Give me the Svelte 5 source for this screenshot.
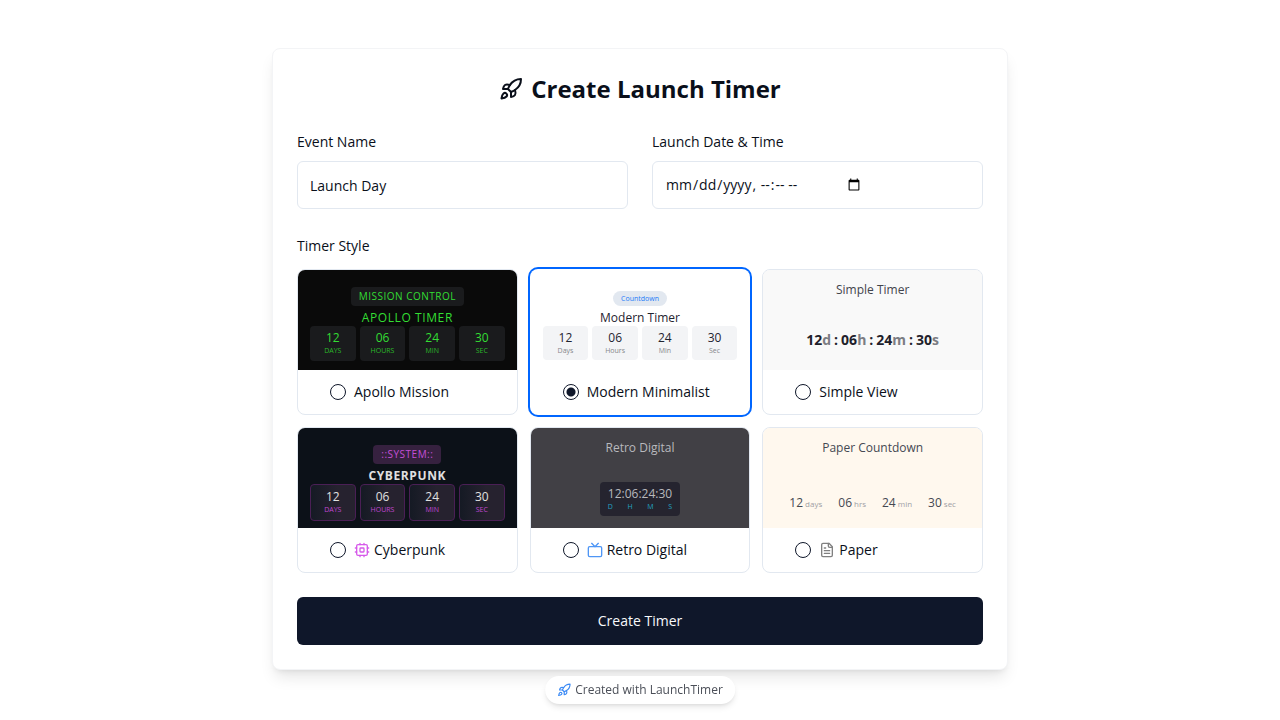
<script lang="ts">
  let eventName = $state('Launch Day');
  let launchAt = $state('');
  let selected = $state('modern');

  const values = ['12', '06', '24', '30'];
  const upper = ['DAYS', 'HOURS', 'MIN', 'SEC'];
  const styles = [
    { id: 'apollo', name: 'Apollo Mission', badge: 'MISSION CONTROL', title: 'APOLLO TIMER', units: upper },
    { id: 'modern', name: 'Modern Minimalist', badge: 'Countdown', title: 'Modern Timer', units: ['Days', 'Hours', 'Min', 'Sec'] },
    { id: 'simple', name: 'Simple View', title: 'Simple Timer', units: ['d', 'h', 'm', 's'] },
    { id: 'cyber', name: 'Cyberpunk', badge: '::SYSTEM::', title: 'CYBERPUNK', units: upper },
    { id: 'retro', name: 'Retro Digital', title: 'Retro Digital', units: ['D', 'H', 'M', 'S'] },
    { id: 'paper', name: 'Paper', title: 'Paper Countdown', units: ['days', 'hrs', 'min', 'sec'] }
  ];
</script>

{#snippet rocket()}
  <svg class="icon rocket" viewBox="0 0 24 24" aria-hidden="true">
    <path d="M4.5 16.5c-1.5 1.26-2 5-2 5s3.74-.5 5-2c.71-.84.7-2.13-.09-2.91a2.18 2.18 0 0 0-2.91-.09z" />
    <path d="m12 15-3-3a22 22 0 0 1 2-3.95A12.88 12.88 0 0 1 22 2c0 2.72-.78 7.5-6 11a22.35 22.35 0 0 1-4 2z" />
    <path d="M9 12H4s.55-3.03 2-4c1.62-1.08 5 0 5 0" />
    <path d="M12 15v5s3.03-.55 4-2c1.08-1.62 0-5 0-5" />
  </svg>
{/snippet}

<main>
  <form class="panel" onsubmit={(e) => e.preventDefault()}>
    <h1>{@render rocket()}Create Launch Timer</h1>

    <div class="fields">
      <div class="field">
        <label for="event-name">Event Name</label>
        <input id="event-name" type="text" bind:value={eventName} />
      </div>
      <div class="field">
        <label for="launch-at">Launch Date &amp; Time</label>
        <input id="launch-at" type="datetime-local" bind:value={launchAt} />
      </div>
    </div>

    <fieldset>
      <legend>Timer Style</legend>
      <div class="styles">
        {#each styles as s (s.id)}
          <label class="style {s.id}" class:selected={selected === s.id}>
            <span class="preview">
              {#if s.badge}
                <span class="head">
                  <span class="badge">{s.badge}</span>
                  <span class="title">{s.title}</span>
                </span>
                <span class="tiles">
                  {#each values as v, i}
                    <span class="tile"><span class="num">{v}</span><span class="unit">{s.units[i]}</span></span>
                  {/each}
                </span>
              {:else}
                <span class="title">{s.title}</span>
                {#if s.id === 'simple'}
                  <span class="line">
                    {#each values as v, i}
                      {#if i}<span>:</span>{/if}
                      <span>{v}<span class="dim">{s.units[i]}</span></span>
                    {/each}
                  </span>
                {:else if s.id === 'retro'}
                  <span class="lcd">
                    <span class="num">{values.join(':')}</span>
                    <span class="lcd-units">{#each s.units as u}<span>{u}</span>{/each}</span>
                  </span>
                {:else}
                  <span class="words">
                    {#each values as v, i}<span>{v}<small>{s.units[i]}</small></span>{/each}
                  </span>
                {/if}
              {/if}
            </span>
            <span class="choice">
              <input type="radio" name="timer-style" value={s.id} bind:group={selected} />
              <span class="name">
                {#if s.id === 'cyber'}
                  <svg class="icon" viewBox="0 0 24 24" aria-hidden="true">
                    <rect x="4" y="4" width="16" height="16" rx="2" />
                    <rect x="9" y="9" width="6" height="6" rx="1" />
                    <path d="M15 2v2M15 20v2M2 15h2M2 9h2M20 15h2M20 9h2M9 2v2M9 20v2" />
                  </svg>
                {:else if s.id === 'retro'}
                  <svg class="icon" viewBox="0 0 24 24" aria-hidden="true">
                    <rect x="2" y="7" width="20" height="15" rx="2" />
                    <path d="m17 2-5 5-5-5" />
                  </svg>
                {:else if s.id === 'paper'}
                  <svg class="icon" viewBox="0 0 24 24" aria-hidden="true">
                    <path d="M15 2H6a2 2 0 0 0-2 2v16a2 2 0 0 0 2 2h12a2 2 0 0 0 2-2V7Z" />
                    <path d="M14 2v4a2 2 0 0 0 2 2h4M10 9H8M16 13H8M16 17H8" />
                  </svg>
                {/if}
                {s.name}
              </span>
            </span>
          </label>
        {/each}
      </div>
    </fieldset>

    <button type="submit">Create Timer</button>
  </form>

  <a class="credit" href="#top">{@render rocket()}Created with LaunchTimer</a>
</main>

<style>
  :global(body) {
    margin: 0;
    background: #fff;
    color: #0a0f1a;
    font-family: 'Open Sans', 'Noto Sans', sans-serif;
    font-size: 14px;
    line-height: 20px;
  }
  * { box-sizing: border-box; }
  main { padding: 48px 16px; }
  .icon {
    width: 16px;
    height: 16px;
    flex: none;
    fill: none;
    stroke: currentColor;
    stroke-width: 2;
    stroke-linecap: round;
    stroke-linejoin: round;
  }
  .panel {
    display: flex;
    flex-direction: column;
    gap: 24px;
    max-width: 736px;
    margin: 0 auto;
    padding: 24px;
    border: 1px solid #f3f4f6;
    border-radius: 8px;
    background: #fff;
    box-shadow: 0 10px 15px -3px rgb(0 0 0 / 0.1), 0 4px 6px -4px rgb(0 0 0 / 0.1);
  }
  h1 {
    display: flex;
    align-items: center;
    justify-content: center;
    gap: 8px;
    margin: 0;
    font-size: 24px;
    line-height: 32px;
    font-weight: 700;
  }
  h1 .icon { width: 24px; height: 24px; }
  .fields {
    display: grid;
    grid-template-columns: 1fr 1fr;
    gap: 24px;
  }
  .field { display: flex; flex-direction: column; gap: 10px; padding-top: 4px; }
  .field label, legend { line-height: 18px; }
  .field input {
    display: flex;
    width: 100%;
    height: 48px;
    padding: 8px 12px;
    border: 1px solid #e2e8f0;
    border-radius: 6px;
    background: #fff;
    color: inherit;
    font: inherit;
  }
  fieldset { margin: 0; padding: 0; border: 0; min-width: 0; }
  legend { padding: 4px 0 14px; }
  .styles {
    display: grid;
    grid-template-columns: repeat(3, 1fr);
    gap: 12px;
  }
  .style {
    display: flex;
    flex-direction: column;
    overflow: hidden;
    border: 1px solid #e2e8f0;
    border-radius: 8px;
    cursor: pointer;
  }
  .style.selected { border-color: transparent; box-shadow: 0 0 0 2px #0066ff; }
  .preview {
    display: flex;
    flex-direction: column;
    align-items: center;
    height: 100px;
    padding: 12px 12px 0;
    font-size: 12px;
    line-height: 16px;
  }
  .head {
    display: flex;
    flex-direction: column;
    align-items: center;
    justify-content: flex-end;
    gap: 4px;
    flex: none;
    height: 44px;
  }
  .badge { padding: 2px 8px; border-radius: 4px; font-size: 10px; line-height: 15px; letter-spacing: 0.5px; }
  .tiles { display: grid; grid-template-columns: repeat(4, 1fr); gap: 4px; align-self: stretch; }
  .tile {
    display: flex;
    flex-direction: column;
    align-items: center;
    padding: 4px 0;
    border-radius: 4px;
  }
  .unit { font-size: 7px; line-height: 10px; }
  .choice { display: flex; align-items: center; gap: 8px; padding: 12px 32px; }
  .choice input {
    appearance: none;
    width: 16px;
    height: 16px;
    margin: 0;
    border: 1px solid #0f172a;
    border-radius: 50%;
  }
  .choice input:checked { background: radial-gradient(circle, #0f172a 4px, transparent 5px); }
  .name { display: flex; align-items: center; gap: 4px; }

  .apollo .preview { background: #0a0a0a; color: #33dd33; }
  .apollo .title { letter-spacing: 0.6px; }
  .apollo .badge, .apollo .tile { background: #1a1b1d; }
  .apollo .tile, .cyber .tile { padding-bottom: 5px; }
  .apollo .unit { color: #2ab82a; }
  .modern .badge { background: #e2e8f0; color: #1f7cf8; border-radius: 8px; font-size: 7px; line-height: 11px; letter-spacing: 0; }
  .modern .title, .modern .num { color: #1f2430; }
  .modern .tile { background: #f3f4f6; }
  .modern .unit { color: #85868a; }
  .simple .preview { background: #f9f9f9; color: #42444c; }
  .simple .line { display: flex; gap: 3px; margin-top: 32px; font-size: 14px; font-weight: 700; line-height: 20px; color: #1f1f2b; }
  .dim { color: #7c7d83; }
  .cyber .preview { background: #0c1118; color: #e0e0e0; }
  .cyber .title { font-weight: 700; letter-spacing: 0.6px; }
  .cyber .badge { background: #36213f; color: #c44fd6; }
  .cyber .tile { background: linear-gradient(90deg, #151a24, #26222f 60%); border: 1px solid #4a1f55; }
  .cyber .unit { color: #c046d2; }
  .cyber .icon { color: #d65aea; }
  .retro .preview { background: #414045; color: #b8b9bd; }
  .lcd {
    display: flex;
    flex-direction: column;
    margin-top: 26px;
    padding: 4px 8px;
    border-radius: 4px;
    background: #25242f;
  }
  .lcd-units { display: flex; justify-content: space-between; font-size: 7px; line-height: 10px; color: #22a3c2; }
  .retro .icon { color: #4f96f5; }
  .paper .preview { background: #fff8ee; color: #454852; }
  .words { display: flex; gap: 16px; margin-top: 39px; }
  small { margin-left: 2px; font-size: 8px; color: #a0a0a5; }
  .paper .icon { color: #808080; }

  button {
    height: 48px;
    border: 0;
    border-radius: 6px;
    background: #0f172a;
    color: #f8fafc;
    font: inherit;
    cursor: pointer;
  }
  .credit {
    position: fixed;
    bottom: 16px;
    left: 50%;
    transform: translateX(-50%);
    display: flex;
    align-items: center;
    gap: 4px;
    padding: 6px 12px;
    border-radius: 14px;
    background: #fff;
    box-shadow: 0 4px 6px -1px rgb(0 0 0 / 0.1), 0 2px 4px -2px rgb(0 0 0 / 0.1);
    color: #4b4f58;
    font-size: 12px;
    line-height: 16px;
    text-decoration: none;
    white-space: nowrap;
  }
  .credit .icon { width: 14px; height: 14px; color: #3b8af5; }

  @media (max-width: 640px) {
    .fields { grid-template-columns: 1fr; }
    .styles { grid-template-columns: 1fr 1fr; }
  }
</style>
